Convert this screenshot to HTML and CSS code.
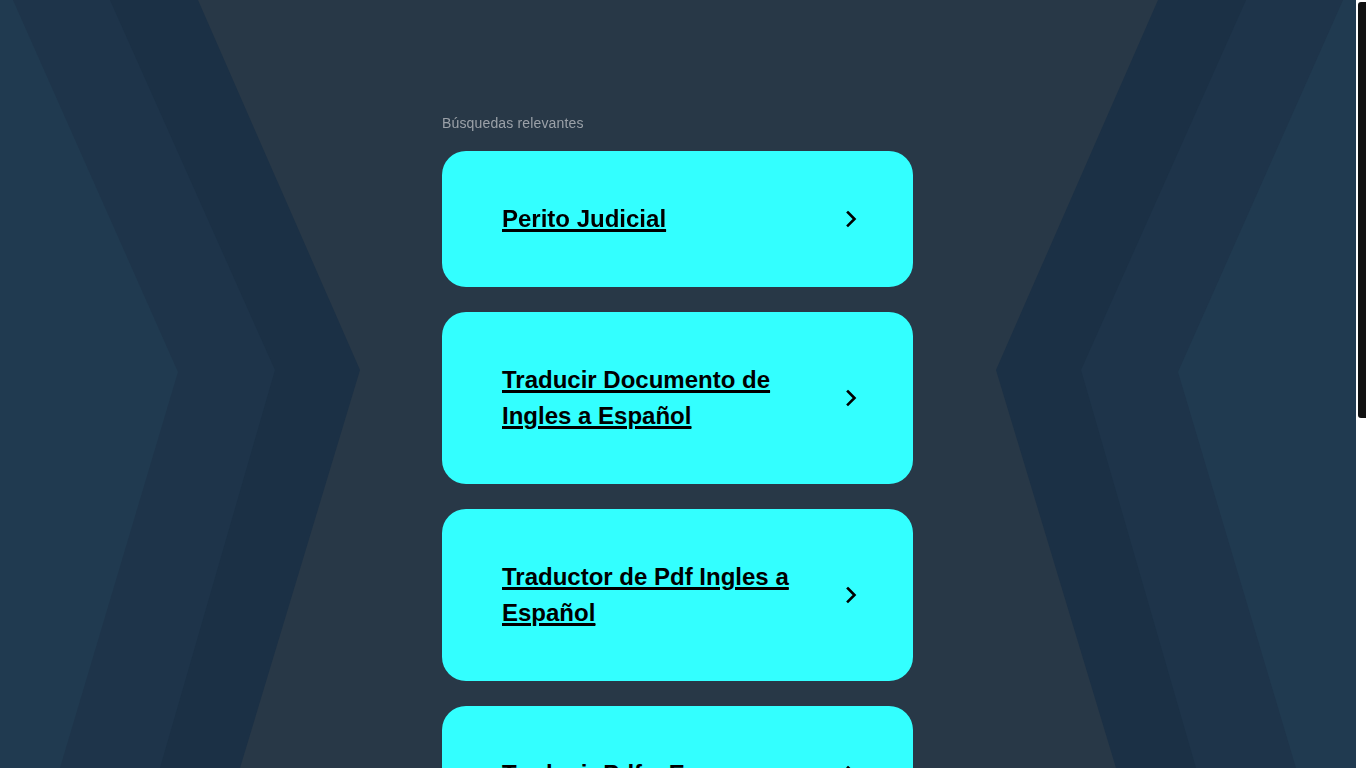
FILE: index.html
```html
<!DOCTYPE html>
<html lang="es">
<head>
<meta charset="utf-8">
<title>Búsquedas relevantes</title>
<link rel="stylesheet" href="styles.css">
</head>
<body>
<svg class="bg" viewBox="0 0 1356 768" preserveAspectRatio="none" aria-hidden="true">
  <polygon points="0,0 198,0 360,370 240,768 0,768" fill="#1b3045"/>
  <polygon points="0,0 110,0 275,370 160,768 0,768" fill="#1e344a"/>
  <polygon points="0,0 13,0 178,372 60,768 0,768" fill="#203a50"/>
  <polygon points="1356,0 1158,0 996,370 1116,768 1356,768" fill="#1b3045"/>
  <polygon points="1356,0 1246,0 1081,370 1196,768 1356,768" fill="#1e344a"/>
  <polygon points="1356,0 1343,0 1178,372 1296,768 1356,768" fill="#203a50"/>
</svg>
<main class="wrap">
  <p class="label">Búsquedas relevantes</p>
  <ul class="list">
    <li><a class="card" href="#"><span class="title">Perito Judicial</span><svg class="chev" viewBox="0 0 24 24"><path d="M9 5.5l6.5 6.5-6.5 6.5"/></svg></a></li>
    <li><a class="card" href="#"><span class="title">Traducir Documento de Ingles a Español</span><svg class="chev" viewBox="0 0 24 24"><path d="M9 5.5l6.5 6.5-6.5 6.5"/></svg></a></li>
    <li><a class="card" href="#"><span class="title">Traductor de Pdf Ingles a Español</span><svg class="chev" viewBox="0 0 24 24"><path d="M9 5.5l6.5 6.5-6.5 6.5"/></svg></a></li>
    <li><a class="card" href="#"><span class="title">Traducir Pdf a Ensayo</span><svg class="chev" viewBox="0 0 24 24"><path d="M9 5.5l6.5 6.5-6.5 6.5"/></svg></a></li>
    <li><a class="card" href="#"><span class="title">Traductor de Documentos</span><svg class="chev" viewBox="0 0 24 24"><path d="M9 5.5l6.5 6.5-6.5 6.5"/></svg></a></li>
    <li><a class="card" href="#"><span class="title">Traducción Jurada</span><svg class="chev" viewBox="0 0 24 24"><path d="M9 5.5l6.5 6.5-6.5 6.5"/></svg></a></li>
  </ul>
</main>
<div class="scrollbar" aria-hidden="true"><div class="thumb"></div></div>
</body>
</html>
```
FILE: styles.css
```css
html {
  background: #283847;
}
body {
  margin: 0 11px 0 0;
  font-family: "Liberation Sans", Arial, sans-serif;
  color: #000;
}
.bg {
  position: fixed;
  top: 0;
  left: 0;
  width: calc(100% - 10px);
  height: 100vh;
  z-index: 0;
}
.scrollbar {
  position: fixed;
  top: 0;
  right: 0;
  width: 10px;
  height: 100vh;
  background: #ffffff;
  z-index: 5;
}
.thumb {
  margin: 2px 0 0 2px;
  width: 8px;
  height: 416px;
  background: #111111;
  border-radius: 3px 0 0 3px;
}
.wrap {
  position: relative;
  z-index: 1;
  width: 471px;
  margin: 0 auto;
  padding: 115px 0 60px;
}
.label {
  margin: 0 0 19px;
  font-size: 14px;
  line-height: 17px;
  letter-spacing: 0.15px;
  color: #9ba1a8;
}
.list {
  list-style: none;
  margin: 0;
  padding: 0;
  display: flex;
  flex-direction: column;
  gap: 25px;
}
.card {
  display: flex;
  align-items: center;
  justify-content: space-between;
  gap: 30px;
  background: #33ffff;
  border-radius: 24px;
  padding: 50px 50px 50px 60px;
  color: #000;
}
.title {
  font-size: 24px;
  line-height: 36px;
  font-weight: bold;
  text-decoration: underline;
  text-decoration-thickness: 2px;
  text-underline-offset: 3px;
  max-width: 300px;
}
.chev {
  width: 24px;
  height: 24px;
  flex: none;
  fill: none;
  stroke: #000;
  stroke-width: 2.6;
  stroke-linecap: square;
  stroke-linejoin: miter;
}
```
